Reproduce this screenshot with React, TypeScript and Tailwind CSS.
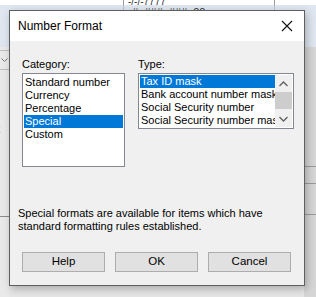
import React from 'react';

const ui = { fontFamily: '"Liberation Sans", Arial, sans-serif' };

const categories = ['Standard number', 'Currency', 'Percentage', 'Special', 'Custom'];
const types = ['Tax ID mask', 'Bank account number mask', 'Social Security number', 'Social Security number mask'];

function Chevron({ up }: { up?: boolean }) {
  return (
    <svg width="9" height="6" viewBox="0 0 9 6" className="block">
      <path d={up ? 'M0.5 5 L4.5 1 L8.5 5' : 'M0.5 1 L4.5 5 L8.5 1'} fill="none" stroke="#606060" strokeWidth="1.3" />
    </svg>
  );
}

function Button({ label }: { label: string }) {
  return (
    <button className="w-[83px] h-[20px] bg-[#e1e1e1] border border-[#adadad] text-[11.5px] text-black leading-none">
      {label}
    </button>
  );
}

export default function App() {
  return (
    <div className="relative w-[316px] h-[297px] overflow-hidden bg-[#e6e6e6]" style={ui}>
      {/* spreadsheet behind the dialog */}
      <div className="flex flex-col">
        <div className="h-[5px] bg-white flex overflow-hidden">
          <div className="w-[124px] border-r border-[#9a9a9a]" />
          <div className="w-[151px] border-r border-[#9a9a9a] text-[10px] leading-[4px] text-[#333] pl-1 overflow-hidden">-/-/-7777</div>
          <div className="flex-1" />
        </div>
        <div className="h-[42px] bg-[#dfe6ef] flex">
          <div className="w-[124px] border-r border-[#b7c0cc]" />
          <div className="w-[151px] border-r border-[#b7c0cc] text-[11px] leading-[10px] text-[#333] pl-[8px] pt-[2px]"># ,### ,### .00</div>
          <div className="flex-1" />
        </div>
        <div className="h-[250px] flex">
          <div className="w-[9px] bg-[#e9e9e9] flex flex-col text-[12px] leading-[15px] text-[#222]">
            <div className="h-[20px] mt-[3px] border-y border-[#bdbdbd] flex items-center justify-center">
              <svg width="7" height="5" viewBox="0 0 7 5"><path d="M0.5 0.5 L3.5 3.5 L6.5 0.5" fill="none" stroke="#777" /></svg>
            </div>
            <div className="mt-[52px] -ml-[14px] whitespace-nowrap">ort</div>
            <div className="-ml-[14px] whitespace-nowrap">er</div>
            <div className="mt-[64px] border-t border-[#8a8a8a]" />
          </div>
          <div className="flex-1" />
          <div className="w-[12px] bg-[#d6d6d6] flex flex-col">
            <div className="mt-[119px] border-t border-[#9c9c9c]" />
            <div className="mt-[16px] border-t border-[#9c9c9c]" />
            <div className="mt-[30px] border-t border-[#9c9c9c]" />
          </div>
        </div>
      </div>

      {/* dialog */}
      <div className="absolute left-[9px] top-[10px] w-[296px] h-[276px] border border-[#5f5f5f] bg-[#f0f0f0] flex flex-col shadow-[2px_3px_8px_rgba(0,0,0,0.25)]">
        <div className="h-[30px] bg-white flex items-center justify-between pl-[8px] pr-[11px] shrink-0">
          <span className="text-[12px] text-black">Number Format</span>
          <svg width="12" height="12" viewBox="0 0 12 12">
            <path d="M1 1 L11 11 M11 1 L1 11" stroke="#111" strokeWidth="1.1" />
          </svg>
        </div>

        <div className="flex-1 flex flex-col pl-[12px] pr-[10px] pt-[16px] pb-[13px] text-[11px] text-black">
          <div className="flex gap-[13px]">
            <div className="flex flex-col w-[103px]">
              <div className="h-[16px] leading-[14px]">Category:</div>
              <div className="h-[94px] bg-white border border-[#828790] pt-[2px] px-[1px] leading-[13px]">
                {categories.map((c) => (
                  <div key={c} className={c === 'Special' ? 'h-[13px] bg-[#0078d7] text-white pl-[1px] whitespace-nowrap' : 'h-[13px] pl-[1px] whitespace-nowrap'}>
                    {c}
                  </div>
                ))}
              </div>
            </div>
            <div className="flex flex-col w-[156px]">
              <div className="h-[16px] leading-[14px]">Type:</div>
              <div className="h-[56px] bg-white border border-[#828790] flex p-[1px]">
                <div className="flex-1 overflow-hidden leading-[13px]">
                  {types.map((t, i) => (
                    <div key={t} className={i === 0 ? 'h-[13px] bg-[#0078d7] text-white pl-[1px] whitespace-nowrap' : 'h-[13px] pl-[1px] whitespace-nowrap'}>
                      {t}
                    </div>
                  ))}
                </div>
                <div className="w-[17px] bg-[#f0f0f0] flex flex-col items-center">
                  <div className="h-[17px] flex items-center justify-center"><Chevron up /></div>
                  <div className="w-[17px] h-[17px] bg-[#cdcdcd]" />
                  <div className="flex-1" />
                  <div className="h-[17px] flex items-center justify-center"><Chevron /></div>
                </div>
              </div>
            </div>
          </div>

          <div className="mt-auto -ml-[4px] leading-[13px] whitespace-nowrap">
            Special formats are available for items which have
            <br />
            standard formatting rules established.
          </div>

          <div className="flex gap-[10px] mt-[19px]">
            <Button label="Help" />
            <Button label="OK" />
            <Button label="Cancel" />
          </div>
        </div>
      </div>
    </div>
  );
}
